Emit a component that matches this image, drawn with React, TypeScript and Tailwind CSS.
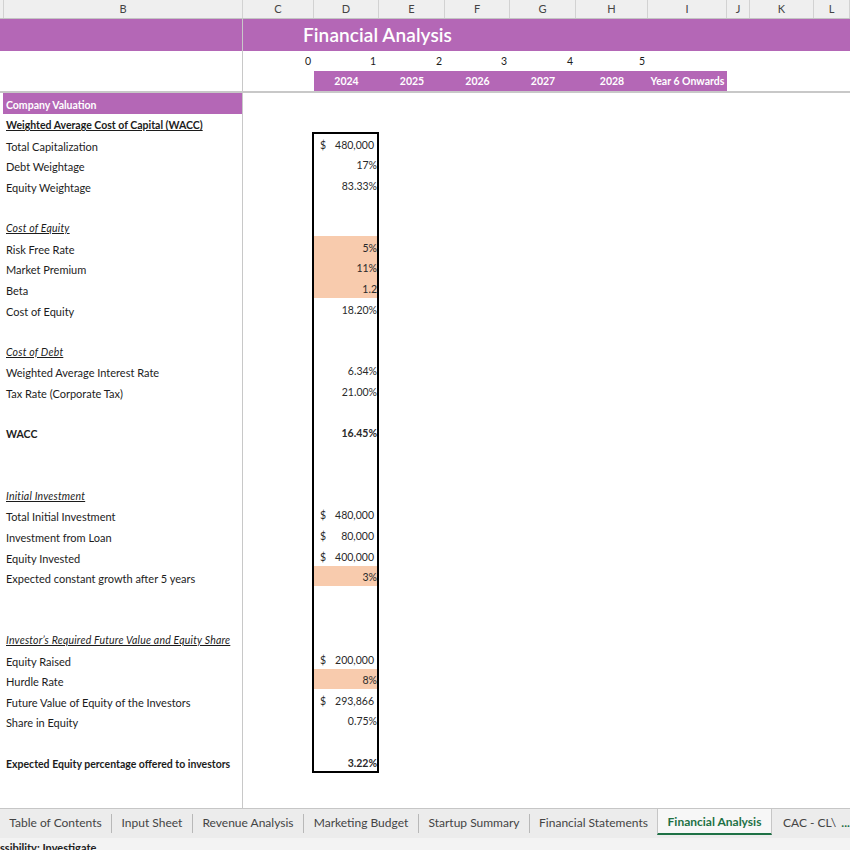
import React from "react";

type Row = {
  label?: string;
  kind?: "purple" | "bold-u" | "ital-u" | "bold" | "plain";
  value?: string;
  dollar?: boolean;
  orange?: boolean;
  boldVal?: boolean;
};

const rows: Row[] = [
  { label: "Company Valuation", kind: "purple" },
  { label: "Weighted Average Cost of Capital (WACC)", kind: "bold-u" },
  { label: "Total Capitalization", value: "480,000", dollar: true },
  { label: "Debt Weightage", value: "17%" },
  { label: "Equity Weightage", value: "83.33%" },
  {},
  { label: "Cost of Equity", kind: "ital-u" },
  { label: "Risk Free Rate", value: "5%", orange: true },
  { label: "Market Premium", value: "11%", orange: true },
  { label: "Beta", value: "1.2", orange: true },
  { label: "Cost of Equity", value: "18.20%" },
  {},
  { label: "Cost of Debt", kind: "ital-u" },
  { label: "Weighted Average Interest Rate", value: "6.34%" },
  { label: "Tax Rate (Corporate Tax)", value: "21.00%" },
  {},
  { label: "WACC", kind: "bold", value: "16.45%", boldVal: true },
  {},
  {},
  { label: "Initial Investment", kind: "ital-u" },
  { label: "Total Initial Investment", value: "480,000", dollar: true },
  { label: "Investment from Loan", value: "80,000", dollar: true },
  { label: "Equity Invested", value: "400,000", dollar: true },
  { label: "Expected constant growth after 5 years", value: "3%", orange: true },
  {},
  {},
  { label: "Investor’s Required Future Value and Equity Share", kind: "ital-u" },
  { label: "Equity Raised", value: "200,000", dollar: true },
  { label: "Hurdle Rate", value: "8%", orange: true },
  { label: "Future Value of Equity of the Investors", value: "293,866", dollar: true },
  { label: "Share in Equity", value: "0.75%" },
  {},
  { label: "Expected Equity percentage offered to investors", kind: "bold", value: "3.22%", boldVal: true },
];

const cols = [
  { l: "", w: "w-[4px]" },
  { l: "B", w: "w-[239px]" },
  { l: "C", w: "w-[71px]" },
  { l: "D", w: "w-[65px]" },
  { l: "E", w: "w-[66px]" },
  { l: "F", w: "w-[65px]" },
  { l: "G", w: "w-[66px]" },
  { l: "H", w: "w-[72px]" },
  { l: "I", w: "w-[79px]" },
  { l: "J", w: "w-[23px]" },
  { l: "K", w: "w-[64px]" },
  { l: "L", w: "flex-1" },
];

function Label({ r }: { r: Row }) {
  if (!r.label) return <div className="h-[20.6px]" />;
  if (r.kind === "purple") {
    return (
      <div className="h-[20.6px] pl-[3px]">
        <div className="h-full bg-[#b467b6] flex items-end pb-[2px] pl-[3px] text-white font-bold text-[10.5px] leading-[13px]">
          {r.label}
        </div>
      </div>
    );
  }
  let cls = "text-[11px]";
  if (r.kind === "bold-u") cls = "text-[10.5px] font-bold underline";
  if (r.kind === "ital-u") cls = "text-[10.5px] italic underline tracking-[0.2px]";
  if (r.kind === "bold") cls = "text-[10.5px] font-bold";
  return (
    <div className={`h-[20.6px] flex items-end pb-[2px] pl-[6px] leading-[13px] text-[#1c1c1c] whitespace-nowrap ${cls}`}>
      {r.label}
    </div>
  );
}

function Value({ r }: { r: Row }) {
  return (
    <div
      className={`h-[20.6px] flex items-end pb-[2px] text-[10.5px] leading-[13px] text-[#2a2a2a] ${
        r.orange ? "bg-[#f8cbad]" : ""
      } ${r.boldVal ? "font-bold" : ""}`}
    >
      {r.value ? (
        r.dollar ? (
          <div className="flex w-full justify-between pl-[7px] pr-[4px]">
            <span>$</span>
            <span>{r.value}</span>
          </div>
        ) : (
          <div className="w-full text-right pr-[1px]">{r.value}</div>
        )
      ) : null}
    </div>
  );
}

const tabs = [
  { t: "Table of Contents", w: "w-[111px]" },
  { t: "Input Sheet", w: "w-[80px]" },
  { t: "Revenue Analysis", w: "w-[110px]" },
  { t: "Marketing Budget", w: "w-[114px]" },
  { t: "Startup Summary", w: "w-[110px]" },
  { t: "Financial Statements", w: "w-[127px]" },
];

export default function App() {
  const numCols = [
    { n: "0", w: "w-[71px]" },
    { n: "1", w: "w-[65px]" },
    { n: "2", w: "w-[66px]" },
    { n: "3", w: "w-[65px]" },
    { n: "4", w: "w-[66px]" },
    { n: "5", w: "w-[72px]" },
  ];
  const years = [
    { y: "2024", w: "w-[65px]" },
    { y: "2025", w: "w-[66px]" },
    { y: "2026", w: "w-[65px]" },
    { y: "2027", w: "w-[66px]" },
    { y: "2028", w: "w-[72px]" },
    { y: "Year 6 Onwards", w: "w-[79px]" },
  ];
  return (
    <div className="w-[850px] h-[850px] overflow-hidden bg-white flex flex-col font-[Lato,sans-serif]">
      {/* column headers */}
      <div className="h-[19px] flex bg-[#efefef] border-b border-[#c4c4c4] shrink-0">
        {cols.map((c, i) => (
          <div
            key={i}
            className={`${c.w} h-full border-r border-[#d2d2d2] flex items-center justify-center text-[11px] text-[#444] shrink-0`}
          >
            {c.l}
          </div>
        ))}
      </div>

      {/* frozen top rows */}
      <div className="flex shrink-0 border-b-2 border-[#c8c8c8]">
        <div className="w-[243px] shrink-0 border-r border-[#c8c8c8] flex flex-col">
          <div className="h-[32px] bg-[#b467b6]" />
          <div className="h-[40px]" />
        </div>
        <div className="flex-1 flex flex-col">
          <div className="h-[32px] bg-[#b467b6] flex items-center">
            <span className="ml-[60px] text-white text-[19px] leading-[24px] font-semibold tracking-[0.1px]">
              Financial Analysis
            </span>
          </div>
          <div className="h-[20px] flex">
            {numCols.map((c) => (
              <div key={c.n} className={`${c.w} flex items-center justify-end pr-[3px] pt-[2px] text-[10.5px] text-[#1c1c1c]`}>
                {c.n}
              </div>
            ))}
          </div>
          <div className="h-[20px] flex">
            <div className="w-[71px]" />
            <div className="flex bg-[#b467b6]">
              {years.map((y) => (
                <div
                  key={y.y}
                  className={`${y.w} flex items-center justify-center pt-[2px] text-white font-bold text-[10.5px] whitespace-nowrap`}
                >
                  {y.y}
                </div>
              ))}
            </div>
          </div>
        </div>
      </div>

      {/* body */}
      <div className="flex-1 flex min-h-0">
        <div className="w-[243px] shrink-0 border-r border-[#c8c8c8] flex flex-col">
          {rows.map((r, i) => (
            <Label key={i} r={r} />
          ))}
        </div>
        <div className="flex-1 flex">
          <div className="w-[70px]" />
          <div className="w-[65px] flex flex-col">
            <div className="h-[40.2px]" />
            <div className="flex flex-col outline-2 outline-black -outline-offset-1">
              {rows.slice(2).map((r, i) => (
                <Value key={i} r={r} />
              ))}
            </div>
          </div>
        </div>
      </div>

      {/* tabs */}
      <div className="h-[30px] shrink-0 bg-[#ececec] border-t border-[#c6c6c6] flex text-[12px] text-[#444]">
        {tabs.map((t, i) => (
          <React.Fragment key={t.t}>
            <div className={`${t.w} shrink-0 flex items-center justify-center whitespace-nowrap pb-[1px]`}>{t.t}</div>
            {i < tabs.length - 1 ? <div className="w-px my-[5px] bg-[#b8b8b8] shrink-0" /> : null}
          </React.Fragment>
        ))}
        <div className="w-[115px] -mt-px h-[27px] shrink-0 bg-[#f7f7f7] border-x border-t border-[#c6c6c6] border-b-2 border-b-[#1e7145] flex items-center justify-center pt-[2px] font-bold text-[#1e7145] whitespace-nowrap">
          Financial Analysis
        </div>
        <div className="flex-1 flex items-center pl-[11px] whitespace-nowrap pb-[1px] overflow-hidden">
          CAC - CL\<span className="ml-[5px] font-bold text-[#1e7145]">...</span>
        </div>
      </div>

      {/* status bar */}
      <div className="h-[12px] shrink-0 bg-[#f3f3f3] overflow-hidden relative">
        <div className="absolute left-0 top-[3px] text-[11px] leading-[13px] font-bold text-[#222] whitespace-nowrap">
          ssibility: Investigate
        </div>
      </div>
    </div>
  );
}
